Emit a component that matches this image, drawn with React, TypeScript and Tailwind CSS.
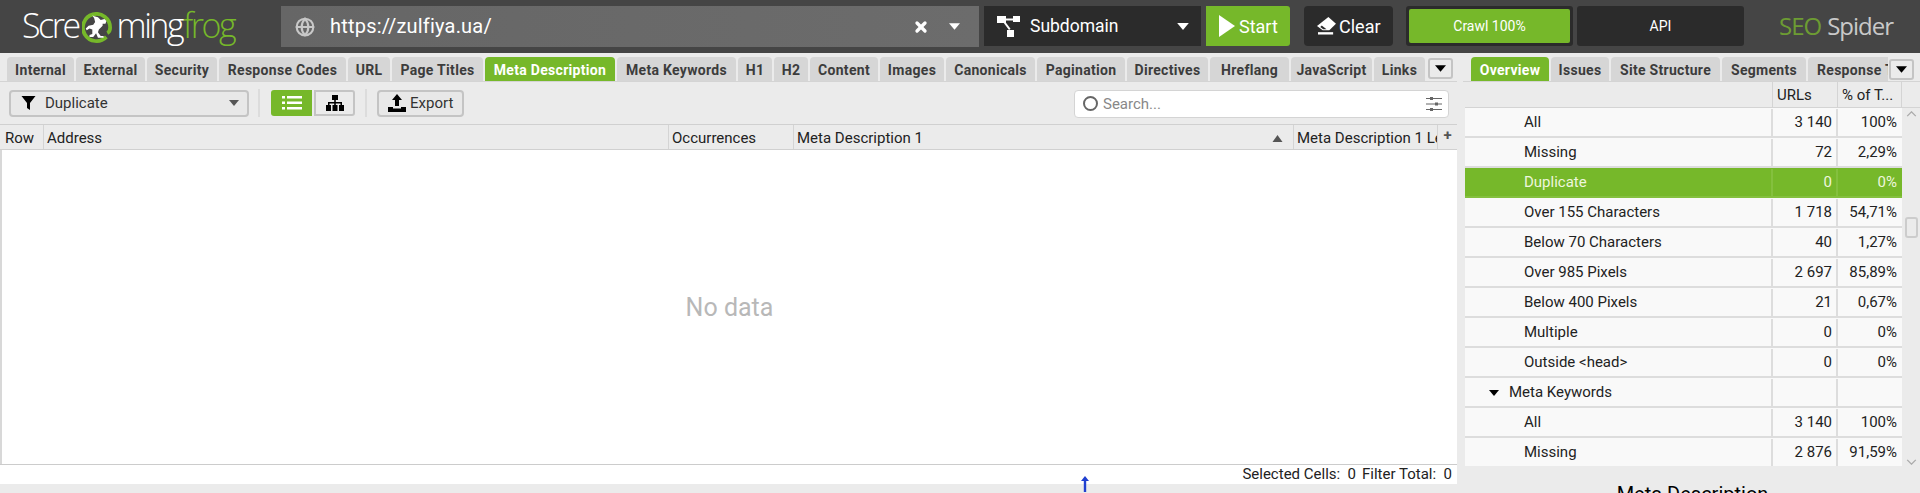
import React from 'react';
import { Globe, X } from 'lucide-react';

const leftTabs = [
  { label: 'Internal', width: 'w-[67px]' },
  { label: 'External', width: 'w-[69px]' },
  { label: 'Security', width: 'w-[70px]' },
  { label: 'Response Codes', width: 'w-[127px]' },
  { label: 'URL', width: 'w-[42px]' },
  { label: 'Page Titles', width: 'w-[91px]' },
  { label: 'Meta Description', width: 'w-[130px]', active: true },
  { label: 'Meta Keywords', width: 'w-[119px]' },
  { label: 'H1', width: 'w-[34px]' },
  { label: 'H2', width: 'w-[34px]' },
  { label: 'Content', width: 'w-[68px]' },
  { label: 'Images', width: 'w-[64px]' },
  { label: 'Canonicals', width: 'w-[89px]' },
  { label: 'Pagination', width: 'w-[88px]' },
  { label: 'Directives', width: 'w-[81px]' },
  { label: 'Hreflang', width: 'w-[79px]' },
  { label: 'JavaScript', width: 'w-[81px]' },
  { label: 'Links', width: 'w-[51px]' },
];

const rightTabs = [
  { label: 'Overview', width: 'w-[78px]', active: true },
  { label: 'Issues', width: 'w-[58px]' },
  { label: 'Site Structure', width: 'w-[109px]' },
  { label: 'Segments', width: 'w-[84px]' },
];

const rows = [
  { label: 'All', urls: '3 140', pct: '100%' },
  { label: 'Missing', urls: '72', pct: '2,29%' },
  { label: 'Duplicate', urls: '0', pct: '0%', selected: true },
  { label: 'Over 155 Characters', urls: '1 718', pct: '54,71%' },
  { label: 'Below 70 Characters', urls: '40', pct: '1,27%' },
  { label: 'Over 985 Pixels', urls: '2 697', pct: '85,89%' },
  { label: 'Below 400 Pixels', urls: '21', pct: '0,67%' },
  { label: 'Multiple', urls: '0', pct: '0%' },
  { label: 'Outside <head>', urls: '0', pct: '0%' },
  { label: 'Meta Keywords', urls: '', pct: '', group: true },
  { label: 'All', urls: '3 140', pct: '100%' },
  { label: 'Missing', urls: '2 876', pct: '91,59%' },
];

const Caret = ({ className }: { className: string }) => (
  <svg viewBox="0 0 10 6" className={className} fill="currentColor">
    <path d="M0 0h10L5 6z" />
  </svg>
);

const Tab = ({ label, width, active }: { label: string; width: string; active?: boolean }) => (
  <div
    className={`${width} h-full shrink-0 rounded-t-[4px] flex items-center justify-center pt-[2px] text-[14px] tracking-[0.3px] font-bold whitespace-nowrap ${
      active ? 'bg-[#76b82a] text-white' : 'bg-[#d6d6d6] text-[#3c3c3c]'
    }`}
  >
    {label}
  </div>
);

const MoreButton = () => (
  <div className="w-[25px] h-[21px] shrink-0 rounded-[3px] border-2 border-[#c4c4c4] bg-[#ebebeb] flex items-center justify-center">
    <Caret className="w-[11px] h-[7px] text-black" />
  </div>
);

const FrogLogo = () => (
  <svg viewBox="0 0 32 32" className="w-[30px] h-[31px] shrink-0 ml-[3px] mr-[5px] mt-[3px]">
    <path
      d="M26 26A14.500 14.500 0 1 1 30 16c0 3-1 5-3 6"
      fill="none"
      stroke="#76b82a"
      strokeWidth="4"
    />
    <path
      d="M13 4l4 1 3 3 4-1 2 2-1 3-3 0 0 2-4 4-1 3 3 4 3 0 0 2-6 0-2-5-3 4-4 0 0-2 3-1 0-5-3-1-3 2-1-2 3-3 5-1 2-3-1-4-2-3z"
      fill="#ffffff"
    />
  </svg>
);

export default function App() {
  return (
    <div className="w-[1920px] h-[493px] overflow-hidden flex flex-col bg-[#ebebeb] font-['Roboto',sans-serif] text-[15px] text-[#222222]">
      {/* Top bar */}
      <div className="h-[53px] shrink-0 bg-[#454545] flex items-start pt-[6px] pl-[22px]">
        <div className="w-[259px] h-[41px] flex items-center font-['Open_Sans',sans-serif] text-[34px] font-light tracking-[-2.500px] text-white -mt-[1px]">
          <span>Scre</span>
          <FrogLogo />
          <span>ming</span>
          <span className="text-[#76b82a] ml-[1px]">frog</span>
        </div>

        <div className="w-[698px] h-[41px] bg-gradient-to-r from-[#666666] to-[#6c6c6c] flex items-center pl-[14px] pr-[19px] text-white">
          <Globe className="w-[20px] h-[20px] text-[#c8c8c8]" strokeWidth={2.5} />
          <span className="ml-[15px] text-[20px] tracking-[0.2px] flex-1 -mt-[1px]">https://zulfiya.ua/</span>
          <X className="w-[16px] h-[16px] mr-[1px]" strokeWidth={5} />
          <Caret className="w-[11px] h-[7px] ml-[19px] text-white" />
        </div>

        <div className="ml-[5px] w-[217px] h-[40px] bg-[#2b2b2b] flex items-center pl-[13px] pr-[12px] text-white">
          <svg viewBox="0 0 24 22" className="w-[24px] h-[22px]" fill="currentColor">
            <path d="M0 1h9v7H0zM16 1h7v6h-7zM10 15h7v7h-7z" />
            <path d="M8 3.500h9v2H8zM6 7l6 8 1.500-1.200-6-8z" />
          </svg>
          <span className="ml-[9px] text-[17.5px] flex-1">Subdomain</span>
          <Caret className="w-[12px] h-[7px] text-white" />
        </div>

        <div className="ml-[5px] w-[84px] h-[40px] bg-[#76b82a] rounded-r-[3px] flex items-center pl-[13px] text-white text-[18px]">
          <svg viewBox="0 0 16 22" className="w-[16px] h-[22px] mr-[4px]" fill="currentColor">
            <path d="M0 0l16 11L0 22z" />
          </svg>
          Start
        </div>

        <div className="ml-[14px] w-[89px] h-[40px] bg-[#2b2b2b] rounded-[4px] flex items-center pl-[13px] text-white text-[18px]">
          <svg viewBox="0 0 20 19" className="w-[19px] h-[18px] mr-[3px]" fill="none">
            <path d="M12 0l8 7-7 7H6L0 9.500z" fill="#ffffff" />
            <path d="M5 9l5 4H6.500L3.500 10.500z" fill="#2b2b2b" />
            <path d="M1 16h16v2.500H1z" fill="#ffffff" />
          </svg>
          Clear
        </div>

        <div className="ml-[13px] w-[167px] h-[40px] bg-[#2b2b2b] rounded-[3px] p-[3px]">
          <div className="h-full bg-[#76b82a] rounded-[2px] flex items-center justify-center text-white text-[14px]">
            Crawl 100%
          </div>
        </div>

        <div className="ml-[4px] w-[167px] h-[40px] bg-[#2b2b2b] rounded-[3px] flex items-center justify-center text-white text-[14px]">
          API
        </div>

        <div className="ml-[35px] h-[40px] flex items-center font-['Open_Sans',sans-serif] text-[24px] tracking-[-1px] whitespace-nowrap">
          <span className="text-[#6d9c33]">SEO</span>
          <span className="ml-[6px] text-[#c9c9c9]">Spider</span>
        </div>
      </div>

      <div className="flex-1 flex min-h-0 pt-[4px]">
        {/* Left panel */}
        <div className="w-[1457px] shrink-0 flex flex-col">
          <div className="h-[25px] shrink-0 flex items-start gap-[2px] pl-[7px] border-b border-[#d4d4d4]">
            {leftTabs.map((t) => (
              <Tab key={t.label} label={t.label} width={t.width} active={t.active} />
            ))}
            <div className="ml-[1px] mt-[1px]">
              <MoreButton />
            </div>
          </div>

          <div className="h-[42px] shrink-0 flex items-center pl-[9px] pr-[8px]">
            <div className="w-[240px] h-[27px] rounded-[4px] border-2 border-[#c4c4c4] bg-[#e8e8e8] flex items-center pl-[10px] pr-[8px]">
              <svg viewBox="0 0 14 14" className="w-[15px] h-[14px] text-black" fill="currentColor">
                <path d="M0 0h14L8.500 7v7L5.500 12V7z" />
              </svg>
              <span className="ml-[9px] text-[#333333] flex-1 pt-[1px]">Duplicate</span>
              <Caret className="w-[10px] h-[6px] text-[#555555]" />
            </div>
            <div className="w-[2px] h-[28px] bg-[#dcdcdc] ml-[9px]" />
            <div className="ml-[11px] w-[41px] h-[26px] rounded-l-[3px] bg-[#76b82a] flex items-center justify-center">
              <svg viewBox="0 0 20 14" className="w-[20px] h-[14px] text-white" fill="currentColor">
                <path d="M0 0h3v2.500H0zM5 0h15v2.500H5zM0 5.500h3V8H0zM5 5.500h15V8H5zM0 11h3v2.500H0zM5 11h15v2.500H5z" />
              </svg>
            </div>
            <div className="ml-[2px] w-[41px] h-[26px] rounded-r-[3px] border-2 border-[#c4c4c4] bg-[#ebebeb] flex items-center justify-center">
              <svg viewBox="0 0 18 16" className="w-[18px] h-[16px] text-black" fill="currentColor">
                <path d="M6 0h6v5H6zM0 10h5v6H0zM6.500 10h5v6h-5zM13 10h5v6h-5z" />
                <path d="M8.200 5h1.600v2H16v3h-1.500V8.500H9.800V10H8.200V8.500H3.500V10H2V7h6.200z" />
              </svg>
            </div>
            <div className="w-[2px] h-[28px] bg-[#dcdcdc] ml-[10px]" />
            <div className="ml-[10px] w-[87px] h-[27px] rounded-[4px] border-2 border-[#c4c4c4] bg-[#e8e8e8] flex items-center pl-[9px] text-[#333333]">
              <svg viewBox="0 0 18 18" className="w-[18px] h-[18px] text-black mr-[4px]" fill="currentColor">
                <path d="M9 0l5 6h-3v6H7V6H4z" />
                <path d="M0 13h5v1.500h8V13h5v5H0z" />
              </svg>
              <span className="pt-[1px]">Export</span>
            </div>
            <div className="ml-auto w-[375px] h-[28px] mt-[1px] rounded-[4px] border border-[#d4d4d4] bg-white flex items-center pl-[8px] pr-[6px]">
              <div className="w-[15px] h-[15px] rounded-full border-2 border-[#666666]" />
              <span className="ml-[5px] text-[#888888] flex-1 pt-[1px]">Search...</span>
              <svg viewBox="0 0 16 14" className="w-[16px] h-[14px] text-[#666666]" fill="currentColor">
                <path d="M0 1h16v1H0zM0 6.500h16v1H0zM0 12h16v1H0z" />
                <path d="M4 0h3v3H4zM9 5.500h3v3H9zM4 11h3v3H4z" />
              </svg>
            </div>
          </div>

          {/* Grid header */}
          <div className="h-[26px] shrink-0 flex items-center bg-[#ebebeb] border-y border-[#d0d0d0] whitespace-nowrap">
            <div className="w-[44px] h-full pl-[5px] pt-[2px] flex items-center border-r border-[#d4d4d4]">Row</div>
            <div className="w-[625px] h-full pl-[3px] pt-[2px] flex items-center border-r border-[#d4d4d4]">Address</div>
            <div className="w-[125px] h-full pl-[3px] pt-[2px] flex items-center border-r border-[#d4d4d4]">Occurrences</div>
            <div className="w-[500px] h-full pl-[3px] pr-[10px] pt-[2px] flex items-center justify-between border-r border-[#d4d4d4]">
              Meta Description 1
              <svg viewBox="0 0 10 7" className="w-[11px] h-[7px] text-[#555555]" fill="currentColor">
                <path d="M5 0l5 7H0z" />
              </svg>
            </div>
            <div className="w-[144px] h-full pl-[3px] pt-[2px] flex items-center overflow-hidden border-r border-[#d4d4d4]">
              Meta Description 1 Length
            </div>
            <div className="flex-1 h-full flex items-center justify-center font-bold text-[#555555] -mt-[3px]">+</div>
          </div>

          {/* Grid body */}
          <div className="h-[314px] shrink-0 bg-white border-l-2 border-[#d8d8d8] flex items-center justify-center pt-[2px] text-[25px] text-[#b8b8b8]">
            No data
          </div>

          {/* Footer */}
          <div className="h-[20px] shrink-0 bg-white border-t border-[#cccccc] flex items-center justify-end gap-[6px] pr-[5px] text-[#222222]">
            <span>Selected Cells:&nbsp; 0</span>
            <span>Filter Total:&nbsp; 0</span>
          </div>

          <div className="flex-1 relative">
            <svg viewBox="0 0 10 16" className="absolute left-[1080px] top-[-8px] w-[10px] h-[16px] text-[#2040d0]" fill="currentColor">
              <path d="M5 0l4 5H6.200v11H3.800V5H1z" />
            </svg>
          </div>
        </div>

        {/* Right panel */}
        <div className="ml-[8px] flex-1 min-w-0 flex flex-col">
          <div className="h-[25px] shrink-0 relative border-b border-[#d4d4d4] -ml-[2px]">
            <div className="flex gap-[2px] h-full pl-[8px] w-[425px] overflow-hidden">
              {rightTabs.map((t) => (
                <Tab key={t.label} label={t.label} width={t.width} active={t.active} />
              ))}
              <div className="w-[90px] h-full shrink-0 rounded-t-[4px] bg-[#d6d6d6] text-[#3c3c3c] text-[14px] tracking-[0.3px] font-bold flex items-center pl-[9px] pt-[2px] whitespace-nowrap overflow-hidden">
                Response Times
              </div>
            </div>
            <div className="absolute left-[426px] top-[2px]">
              <MoreButton />
            </div>
          </div>

          <div className="h-[26px] shrink-0 flex items-center bg-[#ebebeb] border-b border-[#d4d4d4]">
            <div className="w-[308px] h-full border-r border-[#d4d4d4]" />
            <div className="w-[65px] h-full pl-[4px] pt-[1px] flex items-center border-r border-[#d4d4d4]">URLs</div>
            <div className="w-[64px] h-full pl-[4px] pt-[1px] flex items-center border-r border-[#d4d4d4]">% of T...</div>
          </div>

          <div className="h-[358px] shrink-0 flex">
            <div className="w-[437px] shrink-0 overflow-hidden">
              {rows.map((r, i) => (
                <div
                  key={i}
                  className={`h-[30px] shrink-0 flex items-stretch border-b-2 pt-[1px] whitespace-nowrap ${
                    r.selected
                      ? 'bg-[#76b82a] text-[#eef6dd] border-[#84c03e]'
                      : 'bg-[#f9f9f9] border-[#dddddd]'
                  }`}
                >
                  <div className={`w-[308px] flex items-center border-r-2 ${r.selected ? 'border-[#84c03e]' : 'border-[#dddddd]'} ${r.group ? 'pl-[24px]' : 'pl-[59px]'}`}>
                    {r.group && <Caret className="w-[10px] h-[8px] text-black mr-[10px]" />}
                    {r.label}
                  </div>
                  <div className={`w-[65px] flex items-center justify-end pr-[4px] border-r-2 ${r.selected ? 'border-[#84c03e]' : 'border-[#dddddd]'}`}>
                    {r.urls}
                  </div>
                  <div className="w-[64px] flex items-center justify-end pr-[5px]">{r.pct}</div>
                </div>
              ))}
            </div>
            <div className="flex-1 flex flex-col items-center justify-between pt-[3px] pb-[1px] relative">
              <svg viewBox="0 0 12 7" className="w-[11px] h-[6px] text-[#aaaaaa]" fill="none" stroke="currentColor" strokeWidth="1.500">
                <path d="M1 6l5-5 5 5" />
              </svg>
              <div className="absolute top-[109px] left-[3px] w-[13px] h-[21px] rounded-[3px] border-2 border-[#cccccc] bg-[#ebebeb]" />
              <svg viewBox="0 0 12 7" className="w-[11px] h-[6px] text-[#aaaaaa]" fill="none" stroke="currentColor" strokeWidth="1.500">
                <path d="M1 1l5 5 5-5" />
              </svg>
            </div>
          </div>

          <div className="pt-[16px] text-center text-[20px] leading-[24px] text-black">
            Meta Description
          </div>
        </div>
      </div>
    </div>
  );
}
